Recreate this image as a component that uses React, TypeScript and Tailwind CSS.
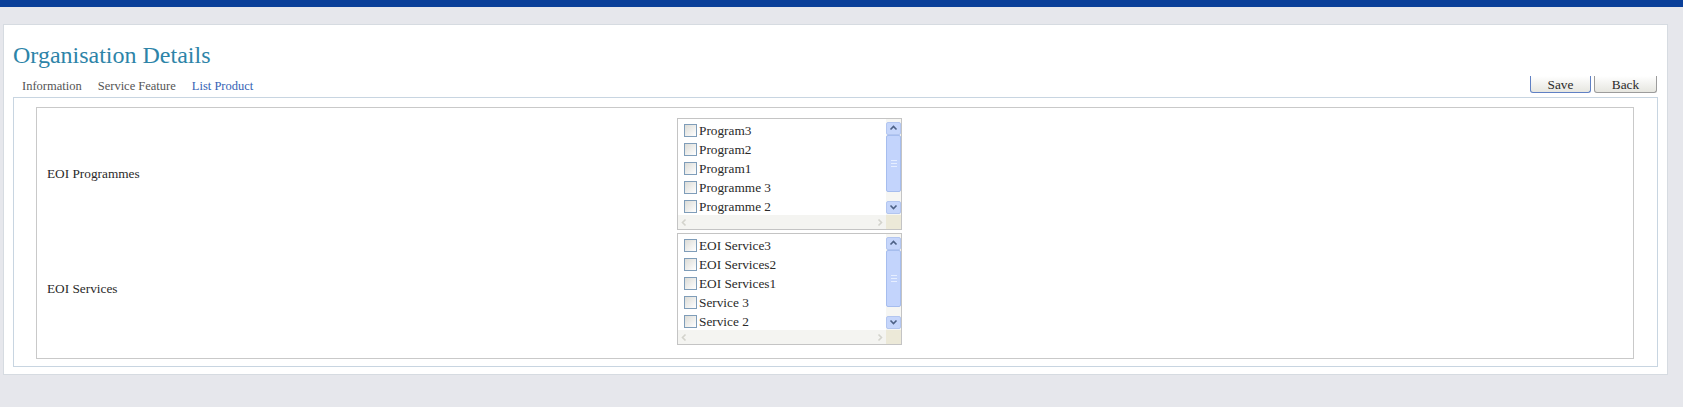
const programmes = ['Program3', 'Program2', 'Program1', 'Programme 3', 'Programme 2'];
const services = ['EOI Service3', 'EOI Services2', 'EOI Services1', 'Service 3', 'Service 2'];

function Chevron({ dir, color }: { dir: 'up' | 'down' | 'left' | 'right'; color: string }) {
  const paths = {
    up: 'M1.5 5.5 L4.5 2.5 L7.5 5.5',
    down: 'M1.5 2.5 L4.5 5.5 L7.5 2.5',
    left: 'M5.5 1.5 L2.5 4.5 L5.5 7.5',
    right: 'M3.5 1.5 L6.5 4.5 L3.5 7.5',
  };
  return (
    <svg width="9" height="9" viewBox="0 0 9 9">
      <path d={paths[dir]} fill="none" stroke={color} strokeWidth="1.6" />
    </svg>
  );
}

function CheckList({ items }: { items: string[] }) {
  return (
    <div className="flex h-[112px] w-[225px] flex-col border border-[#c4c4c4] bg-white">
      <div className="flex min-h-0 flex-1">
        <div className="flex-1 overflow-hidden pl-[6px] pt-[2px]">
          {items.map((it) => (
            <label key={it} className="flex h-[19px] items-center text-[13.3px] text-[#2a2a2a]">
              <span className="mr-[2px] h-[13px] w-[13px] shrink-0 border border-[#7f9db9] bg-gradient-to-br from-[#dcdcd7] to-white" />
              {it}
            </label>
          ))}
        </div>
        <div className="flex w-[15px] flex-col bg-[#f6f6f3]">
          <div className="mt-[3px] flex h-[13px] items-center justify-center rounded-[2px] border border-[#b3c6f0] bg-[#c6d6fb]">
            <Chevron dir="up" color="#4d6185" />
          </div>
          <div className="flex h-[57px] items-center justify-center rounded-[2px] border border-[#a6bdee] bg-[#c3d4fc]">
            <div className="flex flex-col gap-[2px]">
              <span className="h-px w-[6px] bg-[#e6eeff]" />
              <span className="h-px w-[6px] bg-[#e6eeff]" />
              <span className="h-px w-[6px] bg-[#e6eeff]" />
            </div>
          </div>
          <div className="flex-1" />
          <div className="mb-px flex h-[13px] items-center justify-center rounded-[2px] border border-[#b3c6f0] bg-[#c6d6fb]">
            <Chevron dir="down" color="#4d6185" />
          </div>
        </div>
      </div>
      <div className="flex h-[14px]">
        <div className="flex flex-1 items-center justify-between bg-[#f4f4f1] px-[2px]">
          <Chevron dir="left" color="#d3d3cc" />
          <Chevron dir="right" color="#d3d3cc" />
        </div>
        <div className="w-[15px] bg-[#ece9d8]" />
      </div>
    </div>
  );
}

export default function App() {
  return (
    <div className="min-h-[407px] bg-[#e6e7ec] font-['Liberation_Serif',serif]">
      <div className="h-[7px] bg-[#0a3f99]" />
      <div className="ml-[3px] mr-[15px] mt-[17px] h-[351px] border border-[#d6dbe1] bg-white">
        <h1 className="ml-[9px] mt-[16px] text-[24px] leading-[28px] text-[#2d84a8]">Organisation Details</h1>
        <div className="mt-[7px] flex h-[21px] items-start justify-between pl-[18px] pr-[10px]">
          <div className="flex gap-[16px] pt-[2px] text-[12.5px] leading-[16px]">
            <span className="text-[#555]">Information</span>
            <span className="text-[#555]">Service Feature</span>
            <span className="text-[#3563b5]">List Product</span>
          </div>
          <div className="flex gap-[3px]">
            <button className="h-[17px] w-[61px] rounded-b-[3px] border border-t-0 border-[#5f80c4] bg-gradient-to-b from-white to-[#e6e6e0] text-[13.3px] leading-[15px] text-[#2a2a2a]">
              Save
            </button>
            <button className="h-[17px] w-[63px] rounded-b-[3px] border border-t-0 border-[#9c9c9c] bg-gradient-to-b from-white to-[#e6e6e0] text-[13.3px] leading-[15px] text-[#2a2a2a]">
              Back
            </button>
          </div>
        </div>
        <div className="mx-[9px] h-[270px] border border-[#c8d5e1] pt-[9px]">
          <div className="ml-[22px] mr-[23px] flex h-[252px] flex-col gap-[3px] border border-[#c9c9c9] py-[10px]">
            <div className="flex items-center">
              <div className="w-[640px] pl-[10px] text-[13.3px] text-[#2a2a2a]">EOI Programmes</div>
              <CheckList items={programmes} />
            </div>
            <div className="flex items-center">
              <div className="w-[640px] pl-[10px] text-[13.3px] text-[#2a2a2a]">EOI Services</div>
              <CheckList items={services} />
            </div>
          </div>
        </div>
      </div>
    </div>
  );
}
